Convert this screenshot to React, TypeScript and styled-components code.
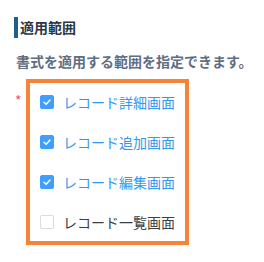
import React from "react";
import styled, { createGlobalStyle } from "styled-components";

const GlobalStyle = createGlobalStyle`
  html, body {
    margin: 0;
    padding: 0;
    background: #ffffff;
  }
  body {
    font-family: "Noto Sans CJK JP", "Noto Sans", sans-serif;
  }
`;

const Page = styled.div`
  width: 264px;
  height: 262px;
  padding: 17px 0 0 14px;
  box-sizing: border-box;
`;

const Heading = styled.h2`
  display: flex;
  align-items: center;
  gap: 2px;
  margin: 0;
  height: 21px;
  font-size: 14px;
  font-weight: 700;
  color: #2b3744;
  line-height: 21px;

  &::before {
    content: "";
    display: block;
    width: 4px;
    height: 21px;
    background: #1e5f8e;
  }
`;

const Description = styled.p`
  margin: 13px 0 0 2px;
  font-size: 14px;
  line-height: 20px;
  font-weight: 700;
  color: #5f6e82;
`;

const Field = styled.div`
  display: flex;
  align-items: flex-start;
  margin-top: 8px;
`;

const Required = styled.span`
  width: 11px;
  margin-top: 14px;
  font-size: 14px;
  line-height: 14px;
  color: #f0506e;
  padding-left: 1px;
`;

const Highlight = styled.div`
  display: flex;
  flex-direction: column;
  gap: 20px;
  padding: 9px 10px;
  border: 4px solid #f5843a;
  width: fit-content;
`;

const Option = styled.label<{ checked: boolean }>`
  display: flex;
  align-items: center;
  gap: 9px;
  height: 20px;
  font-size: 14px;
  line-height: 20px;
  color: ${p => (p.checked ? "#3498f0" : "#3a3f45")};
  cursor: pointer;
`;

const Box = styled.span<{ checked: boolean }>`
  display: flex;
  align-items: center;
  justify-content: center;
  width: 14px;
  height: 14px;
  box-sizing: border-box;
  border-radius: 2px;
  background: ${p => (p.checked ? "#409eff" : "#ffffff")};
  border: 1px solid ${p => (p.checked ? "#409eff" : "#d8dce3")};
`;

const options = [
  { label: "レコード詳細画面", checked: true },
  { label: "レコード追加画面", checked: true },
  { label: "レコード編集画面", checked: true },
  { label: "レコード一覧画面", checked: false },
];

export default function App() {
  return (
    <>
      <GlobalStyle />
      <Page>
        <Heading>適用範囲</Heading>
        <Description>書式を適用する範囲を指定できます。</Description>
        <Field>
          <Required>*</Required>
          <Highlight>
            {options.map(o => (
              <Option key={o.label} checked={o.checked}>
                <Box checked={o.checked}>
                  {o.checked && (
                    <svg width="10" height="10" viewBox="0 0 10 10">
                      <path d="M2 5.2 L4.2 7.2 L8 3" fill="none" stroke="#ffffff" strokeWidth="1.4" strokeLinecap="round" strokeLinejoin="round" />
                    </svg>
                  )}
                </Box>
                {o.label}
              </Option>
            ))}
          </Highlight>
        </Field>
      </Page>
    </>
  );
}
